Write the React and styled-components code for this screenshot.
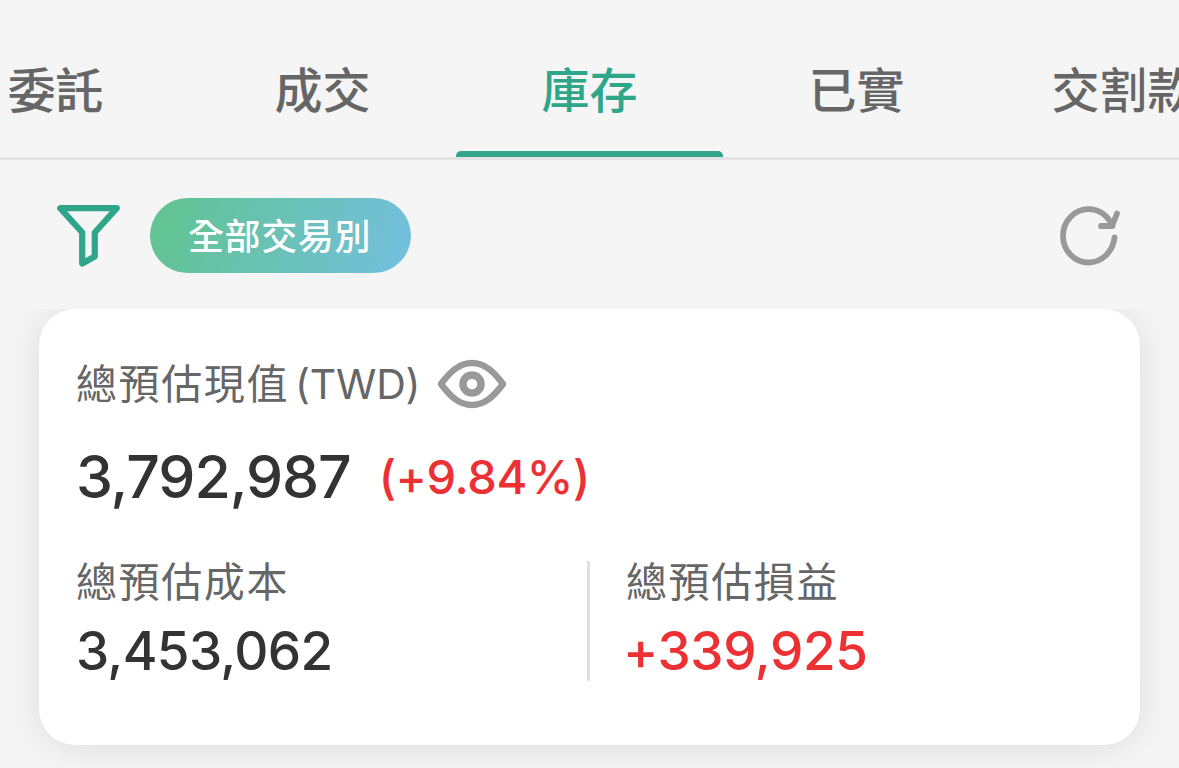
import styled, { createGlobalStyle } from "styled-components";

const GlobalStyles = createGlobalStyle`
  * {
    box-sizing: border-box;
  }
  body {
    margin: 0;
    background-color: #f5f5f5;
    font-family: Inter, "Noto Sans CJK TC", sans-serif;
  }
`;

const PageStyles = styled.div`
  height: 768px;
  overflow: hidden;
  display: flex;
  flex-direction: column;
`;

const TabsStyles = styled.nav`
  flex-shrink: 0;
  height: 160px;
  display: flex;
  align-items: flex-end;
  overflow: hidden;
  border-bottom: 3px solid #e3e3e3;
`;

const TabListStyles = styled.div`
  display: flex;
  flex-shrink: 0;
  margin-left: -78px;
`;

const TabStyles = styled.button`
  width: 267px;
  height: 134px;
  padding: 0;
  flex-shrink: 0;
  display: flex;
  flex-direction: column;
  justify-content: space-between;
  align-items: center;
  border: none;
  background: none;
  color: ${(props) => (props.$active ? "#2fa58a" : "#666666")};
  font-family: inherit;
  font-size: 48px;
  font-weight: 500;
  line-height: 136px;
  white-space: nowrap;
  span {
    height: 128px;
  }
  &::after {
    content: "";
    width: 100%;
    height: 6px;
    flex-shrink: 0;
    border-radius: 5px 5px 0 0;
    background-color: ${(props) => (props.$active ? "#32a58a" : "transparent")};
  }
`;

const ToolbarStyles = styled.div`
  flex-shrink: 0;
  height: 149px;
  padding: 2px 59px 0 57px;
  display: flex;
  align-items: center;
  svg {
    display: block;
    flex-shrink: 0;
  }
`;

const FilterChipStyles = styled.button`
  width: 261px;
  height: 75px;
  margin-left: 30px;
  margin-right: auto;
  padding: 1px 2px 0 0;
  border: none;
  border-radius: 38px;
  background: linear-gradient(105deg, #62c394 8%, #72c0da 94%);
  color: white;
  font-family: inherit;
  font-size: 36px;
  font-weight: 500;
  line-height: 76px;
  letter-spacing: 0.6px;
`;

const ContentStyles = styled.main`
  flex: 1;
  overflow: hidden;
  padding: 0 39px;
`;

const CardStyles = styled.section`
  height: 436px;
  padding: 45px 37px 0;
  border-radius: 36px;
  background-color: white;
  box-shadow: 0 2px 36px rgba(0, 0, 0, 0.1);
`;

const LabelStyles = styled.div`
  display: flex;
  align-items: center;
  height: 60px;
  color: #666666;
  font-size: 41px;
  line-height: 60px;
  letter-spacing: 1.6px;
  white-space: nowrap;
  svg {
    flex-shrink: 0;
    margin-left: 17px;
  }
`;

const CurrencyStyles = styled.span`
  margin-left: 6px;
  letter-spacing: -0.2px;
`;

const TotalStyles = styled.div`
  display: flex;
  align-items: center;
  height: 80px;
  margin-top: 23px;
  line-height: 80px;
  white-space: nowrap;
`;

const AmountStyles = styled.span`
  color: ${(props) => (props.$gain ? "#ec3033" : "#333333")};
  font-size: ${(props) => props.$size}px;
  font-weight: 500;
  letter-spacing: ${(props) => props.$spacing || 0}px;
`;

const RateStyles = styled(AmountStyles)`
  margin-left: 28px;
`;

const SummaryStyles = styled.div`
  display: flex;
  margin-top: 44px;
`;

const SummaryItemStyles = styled.div`
  width: 511px;
  height: 120px;
  padding-left: ${(props) => (props.$divided ? "36px" : "0")};
  border-left: ${(props) => (props.$divided ? "3px solid #e0e0e0" : "none")};
  flex-shrink: 0;
  ${LabelStyles} {
    height: 42px;
    line-height: 42px;
  }
  ${AmountStyles} {
    display: block;
    margin-top: 13px;
    margin-left: ${(props) => (props.$divided ? "-3px" : "0")};
    line-height: 70px;
  }
`;

const tabs = ["委託", "成交", "庫存", "已實", "交割款"];

function FilterIcon() {
  return (
    <svg width="63" height="64" viewBox="0 0 63 64" fill="none">
      <path
        d="M3.200 4.200H59.800L37.800 28.500V52.500L25.200 59.500V28.500L3.200 4.200Z"
        stroke="#2fa58a"
        strokeWidth="6.200"
        strokeLinejoin="round"
      />
    </svg>
  );
}

function RefreshIcon() {
  return (
    <svg width="60" height="60" viewBox="0 0 60 60" fill="none">
      <path
        d="M54.500 31.500C53 45.500 42 56.500 28.500 56.500C14.500 56.500 3 44.500 3 30C3 15 14.500 3.200 28.500 3.200C39 3.200 48 9.500 52.500 20M57 7.500L52 20H41"
        stroke="#999999"
        strokeWidth="5.800"
        strokeLinecap="round"
        strokeLinejoin="round"
      />
    </svg>
  );
}

function EyeIcon() {
  return (
    <svg width="70" height="50" viewBox="0 0 70 50" fill="none">
      <path
        d="M4 25C13 13 22 4 35 4C48 4 57 13 66 25C57 37 48 46 35 46C22 46 13 37 4 25Z"
        stroke="#999999"
        strokeWidth="6.500"
        strokeLinejoin="round"
      />
      <circle cx="35" cy="25" r="9" stroke="#999999" strokeWidth="7.500" />
    </svg>
  );
}

function App() {
  return (
    <PageStyles>
      <GlobalStyles />
      <TabsStyles>
        <TabListStyles>
          {tabs.map((tab) => (
            <TabStyles key={tab} $active={tab === "庫存"}>
              <span>{tab}</span>
            </TabStyles>
          ))}
        </TabListStyles>
      </TabsStyles>
      <ToolbarStyles>
        <FilterIcon />
        <FilterChipStyles>全部交易別</FilterChipStyles>
        <RefreshIcon />
      </ToolbarStyles>
      <ContentStyles>
        <CardStyles>
          <LabelStyles>
            總預估現值
            <CurrencyStyles>(TWD)</CurrencyStyles>
            <EyeIcon />
          </LabelStyles>
          <TotalStyles>
            <AmountStyles $size={59} $spacing={-1.1}>
              3,792,987
            </AmountStyles>
            <RateStyles $gain $size={47} $spacing={-0.4}>
              (+9.84%)
            </RateStyles>
          </TotalStyles>
          <SummaryStyles>
            <SummaryItemStyles>
              <LabelStyles>總預估成本</LabelStyles>
              <AmountStyles $size={53} $spacing={-0.7}>
                3,453,062
              </AmountStyles>
            </SummaryItemStyles>
            <SummaryItemStyles $divided>
              <LabelStyles>總預估損益</LabelStyles>
              <AmountStyles $gain $size={53} $spacing={-0.4}>
                +339,925
              </AmountStyles>
            </SummaryItemStyles>
          </SummaryStyles>
        </CardStyles>
      </ContentStyles>
    </PageStyles>
  );
}

export default App;
